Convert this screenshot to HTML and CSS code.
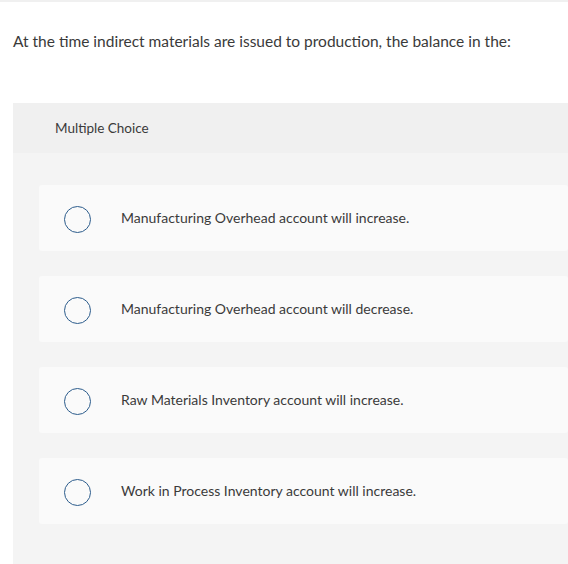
FILE: index.html
```html
<!DOCTYPE html>
<html>
<head>
<meta charset="utf-8">
<link rel="stylesheet" href="styles.css">
</head>
<body>
<div class="page">
  <p class="question">At the time indirect materials are issued to production, the balance in the:</p>
  <div class="panel">
    <div class="panel-head">Multiple Choice</div>
    <div class="options">
      <div class="option"><span class="radio"></span><span class="label">Manufacturing Overhead account will increase.</span></div>
      <div class="option"><span class="radio"></span><span class="label">Manufacturing Overhead account will decrease.</span></div>
      <div class="option"><span class="radio"></span><span class="label">Raw Materials Inventory account will increase.</span></div>
      <div class="option"><span class="radio"></span><span class="label">Work in Process Inventory account will increase.</span></div>
    </div>
  </div>
</div>
</body>
</html>
```
FILE: styles.css
```css
html, body {
  margin: 0;
  padding: 0;
  background: #fff;
  overflow: hidden;
}
body {
  font-family: Lato, "Open Sans", sans-serif;
  color: #3a3a3a;
  border-top: 2px solid #f0f0f0;
  height: 562px;
}
.page {
  padding-left: 13px;
}
.question {
  margin: 0;
  padding: 29px 0 0 0;
  font-size: 15.5px;
  line-height: 20px;
  color: #3a3a3a;
}
.panel {
  margin-top: 52px;
  background: #f4f4f4;
  height: 470px;
}
.panel-head {
  background: #f0f0f0;
  height: 50px;
  display: flex;
  align-items: center;
  padding-left: 42px;
  font-size: 13.5px;
  color: #3a3a3a;
}
.options {
  padding: 32px 0 0 26px;
  display: flex;
  flex-direction: column;
  gap: 25px;
}
.option {
  background: #fafafa;
  border-radius: 3px;
  height: 66px;
  display: flex;
  align-items: center;
  padding-left: 25px;
}
.radio {
  width: 25px;
  height: 25px;
  border: 1.5px solid #2c5c8c;
  border-radius: 50%;
  box-sizing: content-box;
  flex: none;
  margin-top: 3px;
}
.label {
  margin-left: 30px;
  margin-bottom: 1px;
  font-size: 14px;
  color: #3a3a3a;
}
```
